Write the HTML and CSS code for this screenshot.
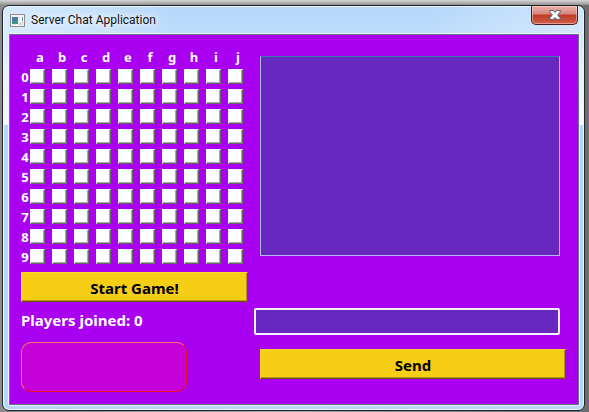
FILE: index.html
```html
<!DOCTYPE html>
<html lang="en">
<head>
<meta charset="utf-8">
<title>Server Chat Application</title>
<link rel="stylesheet" href="styles.css">
</head>
<body>
<div class="window">
  <header class="titlebar">
    <svg class="app-icon" width="15" height="13" viewBox="0 0 15 13" aria-hidden="true">
      <rect x="0.5" y="0.5" width="14" height="12" fill="#f2f2f2" stroke="#8d8d8d"/>
      <rect x="2" y="3" width="6" height="7" fill="#3f9a80"/>
      <path d="M2 3h6v2L2 9z" fill="#4a7aa8"/>
      <rect x="9" y="9" width="2" height="2" fill="#c4c8cc"/>
      <rect x="12" y="3" width="1" height="8" fill="#cfd5da"/>
      <rect x="12" y="3" width="1" height="4" fill="#6c9cc0"/>
    </svg>
    <h1 class="title">Server Chat Application</h1>
    <button class="close" type="button" aria-label="Close">
      <svg width="12" height="10" viewBox="0 0 12 10" aria-hidden="true">
        <path d="M.7 .6h3.800L6 2.400 7.500 .6h3.800v1.400L8.700 5l2.600 3v1.400H7.500L6 7.600 4.500 9.400H.7V8l2.600-3L.7 2z" fill="#fbfbfb" stroke="#53596b"/>
      </svg>
    </button>
  </header>
  <main class="client">
    <section class="game">
      <table class="board">
        <thead><tr id="letters"><td></td></tr></thead>
        <tbody id="cells"></tbody>
      </table>
      <button class="action" type="button">Start Game!</button>
      <p class="players">Players joined: 0</p>
      <div class="status"></div>
    </section>
    <section class="chat">
      <textarea class="log" aria-label="Messages" readonly></textarea>
      <input class="message" type="text" aria-label="Message">
      <button class="action send" type="button">Send</button>
    </section>
  </main>
</div>
<script src="board.js"></script>
</body>
</html>
```
FILE: styles.css
```css
* {
  box-sizing: border-box;
}

body {
  margin: 0;
  padding: 5px 4px 1px 2px;
  min-height: 100vh;
  background:
    linear-gradient(#d6d6d6, #929292 5px, transparent 5px),
    linear-gradient(90deg, #8a8a8a, #a5a5a5 50%, #6c6c6c);
  font-family: "Noto Sans", "Open Sans", sans-serif;
}

.window {
  padding: 0 5px 5px 6px;
  border: 1px solid #20242c;
  border-radius: 7px;
  background:
    linear-gradient(100deg, rgba(255, 255, 255, .45), transparent 30%, transparent 70%, rgba(255, 255, 255, .4)) top / 100% 119px no-repeat,
    linear-gradient(#b5d7fa, #bddcfb 28px, #f0f6fd 110px, #f0f6fd 119px, #b4d6f8 119px, #b4d6f8);
  box-shadow: inset 0 0 0 1px #eef7ff;
}

.titlebar {
  display: flex;
  align-items: center;
  height: 28px;
  padding: 0 1px;
}

.title {
  flex: 1;
  margin: 0 0 0 6px;
  font: 12px Roboto, sans-serif;
  color: #111;
  text-shadow: 0 0 6px #fff, 0 0 8px #fff;
}

.close {
  display: flex;
  align-items: center;
  justify-content: center;
  align-self: flex-start;
  width: 47px;
  height: 19px;
  padding: 0;
  border: 1px solid #4d1c20;
  border-top: 0;
  border-radius: 0 0 5px 5px;
  background: linear-gradient(#e9b0a8, #d8877c 8px, #bd3a26 9px, #d0604a);
  box-shadow: inset 0 0 0 1px rgba(255, 220, 210, .5);
}

.client {
  display: flex;
  gap: 6px;
  min-height: 371px;
  padding: 11px 12px 11px 11px;
  border: 1px solid #6b7385;
  background: #aa00f2;
  box-shadow: 0 0 0 1px #e6f3ff;
}

.game {
  flex: 0 0 227px;
  min-width: 0;
}

.board {
  width: 228px;
  table-layout: fixed;
  border-collapse: collapse;
  font-size: 13px;
  font-weight: 700;
  line-height: 18px;
  color: #fff;
}

.board th,
.board td {
  width: 22px;
  height: 20px;
  padding: 0;
}

.board th {
  padding-top: 2px;
}

.board tr > :first-child {
  width: 8px;
}

.board td {
  padding-left: 1px;
}

.cell {
  display: block;
  width: 15px;
  height: 15px;
  padding: 0;
  border: 1px solid #fff;
  border-right-color: #696969;
  border-bottom-color: #696969;
  background: #fff;
  box-shadow: inset -1px -1px 0 #a8a8a8;
}

.action {
  display: block;
  width: 100%;
  height: 30px;
  margin: 6px 0 0;
  padding: 2px 0 0;
  border: 1px solid #ffd92e;
  border-right-color: #66550a;
  border-bottom-color: #66550a;
  background: #f6ce16;
  box-shadow: inset -1px -1px 0 #b49611;
  font: 700 15px "Noto Sans", sans-serif;
  color: #000;
}

.players {
  margin: 0;
  font-size: 15px;
  font-weight: 700;
  line-height: 36px;
  height: 40px;
  color: #fff;
}

.status {
  width: 166px;
  height: 50px;
  border: 1px solid;
  border-color: #ff6a70 #f01020 #f01020 #ff6a70;
  border-radius: 10px;
  background: #c500d8;
}

.chat {
  display: flex;
  flex: 1;
  flex-direction: column;
  min-width: 0;
  padding-top: 10px;
}

.log {
  height: 200px;
  margin: 0 6px;
  border: 1px solid #b7b7ee;
  border-top-color: #3a78b0;
  background: #6728c0;
  color: #fff;
  resize: none;
}

.message {
  height: 27px;
  margin: 52px 6px 0 0;
  border: 2px solid #f4f0ff;
  border-radius: 2px;
  background: #6728c0;
  color: #fff;
}

.send {
  width: auto;
  margin: 14px 0 0 6px;
}
```
FILE: board.js
```js
const letters = "abcdefghij";

for (const letter of letters) {
  const head = document.createElement("th");
  head.scope = "col";
  head.textContent = letter;
  document.getElementById("letters").append(head);
}

for (let row = 0; row < 10; row++) {
  const line = document.createElement("tr");
  const head = document.createElement("th");
  head.scope = "row";
  head.textContent = row;
  line.append(head);
  for (const letter of letters) {
    const square = document.createElement("td");
    const button = document.createElement("button");
    button.type = "button";
    button.className = "cell";
    button.setAttribute("aria-label", letter + row);
    square.append(button);
    line.append(square);
  }
  document.getElementById("cells").append(line);
}
```
